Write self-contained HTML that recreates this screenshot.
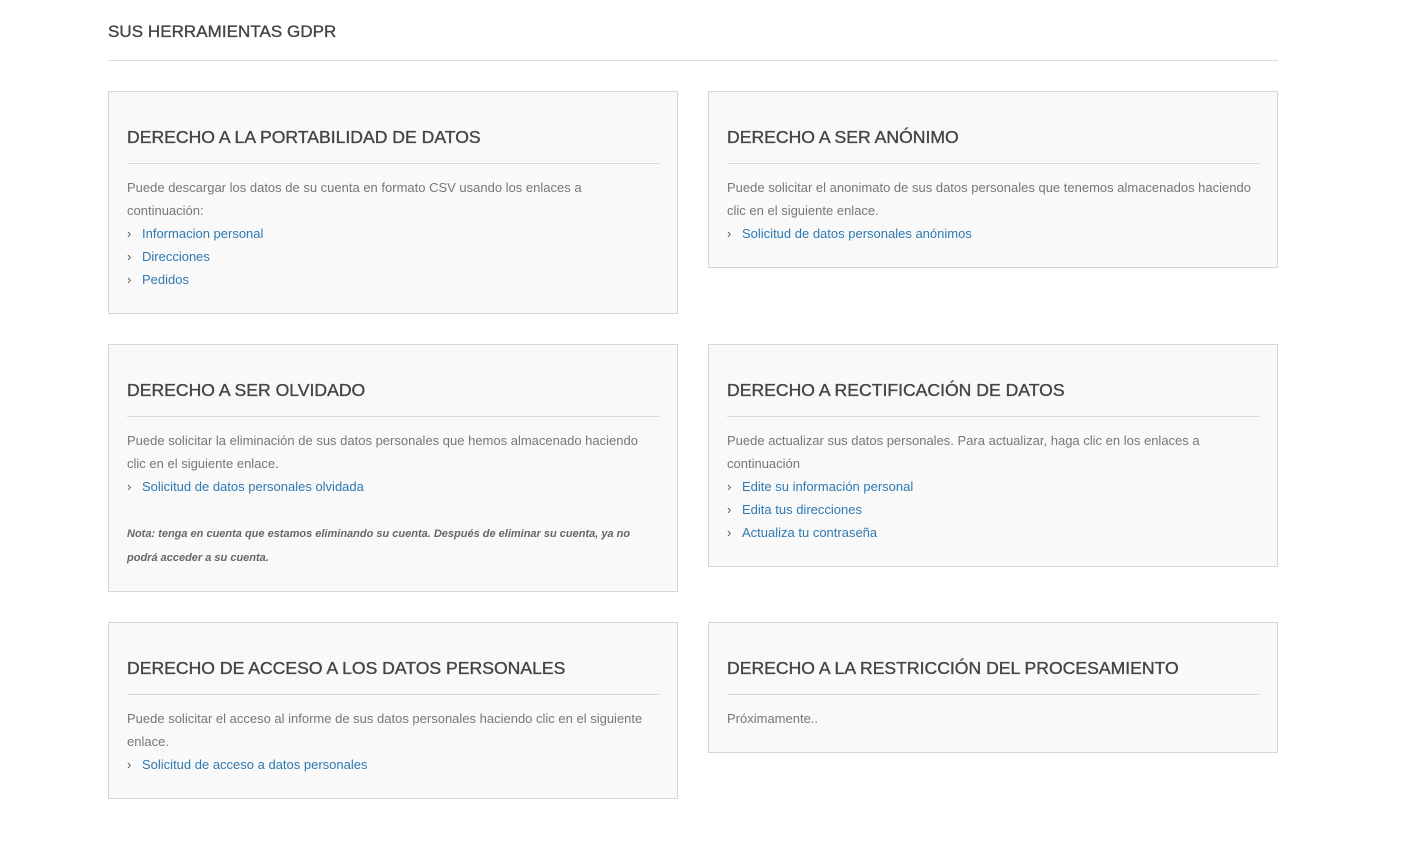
<!DOCTYPE html>
<html><head><meta charset="utf-8"><style>
body{margin:0;background:#fff;width:1404px;height:841px;position:relative;font-family:"Liberation Sans",sans-serif;overflow:hidden}
.title{position:absolute;left:108px;top:20px;font-size:17px;color:#444;-webkit-text-stroke:0.35px #444;letter-spacing:0.05px;line-height:24px}
.hr{position:absolute;left:108px;top:60px;width:1170px;height:1px;background:#ddd}
.box{position:absolute;width:568px;background:#f9f9f9;border:1px solid #d6d6d6;padding:0 18px;box-sizing:border-box}
h3{margin:33px 0 0;font-weight:normal;font-size:17.6px;line-height:24px;color:#444;-webkit-text-stroke:0.35px #444;letter-spacing:0;padding-bottom:14px;border-bottom:1px solid #d9d9d9}
.c{margin-top:12px;font-size:13px;line-height:23px;color:#777}
.c a{color:#2f79b3;text-decoration:none;display:block}
.c a:before{content:"›";color:#555;display:inline-block;width:15px;font-size:13px}
.note{font-size:11px;font-style:italic;font-weight:bold;color:#666;line-height:24px;margin-top:24px}
</style></head><body>
<div class="title">SUS HERRAMIENTAS GDPR</div>
<div class="hr"></div>

<div class="box" style="left:108px;top:91px;width:570px;height:223px">
<h3>DERECHO A LA PORTABILIDAD DE DATOS</h3>
<div class="c">Puede descargar los datos de su cuenta en formato CSV usando los enlaces a continuación:
<a>Informacion personal</a><a>Direcciones</a><a>Pedidos</a></div></div>

<div class="box" style="left:708px;top:91px;width:570px;height:177px">
<h3>DERECHO A SER ANÓNIMO</h3>
<div class="c">Puede solicitar el anonimato de sus datos personales que tenemos almacenados haciendo clic en el siguiente enlace.
<a>Solicitud de datos personales anónimos</a></div></div>

<div class="box" style="left:108px;top:344px;width:570px;height:248px">
<h3>DERECHO A SER OLVIDADO</h3>
<div class="c">Puede solicitar la eliminación de sus datos personales que hemos almacenado haciendo clic en el siguiente enlace.
<a>Solicitud de datos personales olvidada</a>
<div class="note">Nota: tenga en cuenta que estamos eliminando su cuenta. Después de eliminar su cuenta, ya no podrá acceder a su cuenta.</div></div></div>

<div class="box" style="left:708px;top:344px;width:570px;height:223px">
<h3>DERECHO A RECTIFICACIÓN DE DATOS</h3>
<div class="c">Puede actualizar sus datos personales. Para actualizar, haga clic en los enlaces a continuación
<a>Edite su información personal</a><a>Edita tus direcciones</a><a>Actualiza tu contraseña</a></div></div>

<div class="box" style="left:108px;top:622px;width:570px;height:177px">
<h3>DERECHO DE ACCESO A LOS DATOS PERSONALES</h3>
<div class="c">Puede solicitar el acceso al informe de sus datos personales haciendo clic en el siguiente enlace.
<a>Solicitud de acceso a datos personales</a></div></div>

<div class="box" style="left:708px;top:622px;width:570px;height:131px">
<h3>DERECHO A LA RESTRICCIÓN DEL PROCESAMIENTO</h3>
<div class="c">Próximamente..</div></div>
</body></html>
